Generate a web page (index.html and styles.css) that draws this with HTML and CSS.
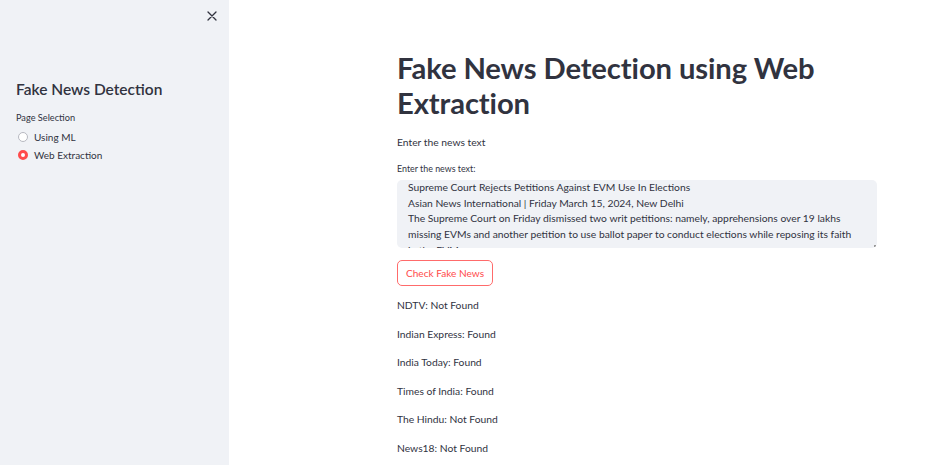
FILE: index.html
```html
<!DOCTYPE html>
<html>
<head>
<meta charset="utf-8">
<link rel="stylesheet" href="styles.css">
</head>
<body>
<div class="app">
  <aside class="sidebar">
    <div class="close-row">
      <svg class="close" width="10" height="10" viewBox="0 0 10 10"><path d="M1 1L9 9M9 1L1 9" stroke="#31333f" stroke-width="1.3" stroke-linecap="round"/></svg>
    </div>
    <h2 class="side-title">Fake News Detection</h2>
    <div class="side-label">Page Selection</div>
    <div class="radio-group">
      <label class="radio"><span class="dot"></span>Using ML</label>
      <label class="radio"><span class="dot checked"></span>Web Extraction</label>
    </div>
  </aside>
  <main class="main">
    <div class="block">
      <h1 class="title">Fake News Detection using Web Extraction</h1>
      <p class="para">Enter the news text</p>
      <div class="field-label">Enter the news text:</div>
      <div class="textarea">
        <div class="ta-text">Supreme Court Rejects Petitions Against EVM Use In Elections<br>Asian News International | Friday March 15, 2024, New Delhi<br>The Supreme Court on Friday dismissed two writ petitions: namely, apprehensions over 19 lakhs<br>missing EVMs and another petition to use ballot paper to conduct elections while reposing its faith<br>in the EVMs.</div>
        <span class="grip"></span>
      </div>
      <button class="btn">Check Fake News</button>
      <div class="results">
        <p class="res">NDTV: Not Found</p>
        <p class="res">Indian Express: Found</p>
        <p class="res">India Today: Found</p>
        <p class="res">Times of India: Found</p>
        <p class="res">The Hindu: Not Found</p>
        <p class="res">News18: Not Found</p>
      </div>
    </div>
  </main>
</div>
</body>
</html>
```
FILE: styles.css
```css
* { box-sizing: border-box; }
html, body { margin: 0; padding: 0; height: 100%; overflow: hidden; background: #fff; }
body { font-family: Lato, "Open Sans", sans-serif; color: #31333f; }
.app { display: flex; height: 465px; }
.sidebar { width: 229px; flex: none; background: #f0f2f6; padding: 0 12px 0 16px; }
.close-row { display: flex; justify-content: flex-end; padding-top: 11px; height: 74px; }
.side-title { font-size: 15.5px; font-weight: 600; margin: 5px 0 0; line-height: 20px; }
.side-label { font-size: 9.2px; margin-top: 12px; line-height: 13px; color: #31333f; }
.radio-group { display: flex; flex-direction: column; gap: 4px; margin-top: 6px; }
.radio { display: flex; align-items: center; font-size: 10px; line-height: 14px; gap: 6px; padding-left: 2px; }
.dot { width: 10px; height: 10px; border-radius: 50%; border: 1px solid #b7b9c1; background: #fff; }
.dot.checked { border: 3px solid #ff4b4b; background: #fff; }
.main { flex: 1; }
.block { width: 480px; margin-left: 168px; padding-top: 50px; }
.title { font-size: 29.2px; font-weight: 700; line-height: 35px; margin: 0; letter-spacing: -0.1px; }
.para { font-size: 10.3px; margin: 14px 0 0; line-height: 16px; }
.field-label { font-size: 8.9px; margin-top: 13px; line-height: 12px; }
.textarea { position: relative; margin-top: 5px; height: 68px; background: #f0f2f6; border-radius: 5px; overflow: hidden; padding: 0 11px 0; }
.ta-text { font-size: 10.3px; line-height: 15.7px; white-space: nowrap; }
.grip { position: absolute; right: 1px; bottom: 1px; width: 2px; height: 2px; background: #999; }
.btn { display: block; margin-top: 12px; height: 26px; padding: 0 8px; background: #fff; border: 1px solid #ff6b6b; border-radius: 5px; color: #ff4b4b; font-family: inherit; font-size: 10.1px; }
.results { margin-top: 12px; }
.res { font-size: 10.3px; line-height: 14px; margin: 0 0 14.5px; }
```
